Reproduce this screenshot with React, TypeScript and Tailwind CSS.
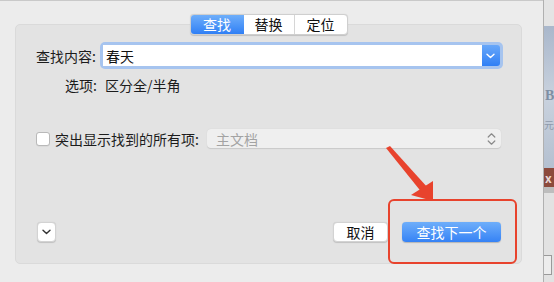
import React from "react";

const font = { fontFamily: '"Noto Sans CJK SC", "Noto Sans", sans-serif' };

function ChevronDown({ className = "", color = "#fff" }: { className?: string; color?: string }) {
  return (
    <svg className={className} width="9" height="6" viewBox="0 0 9 6" fill="none">
      <path d="M1 1.2 L4.5 4.6 L8 1.2" stroke={color} strokeWidth="1.4" strokeLinecap="round" strokeLinejoin="round" />
    </svg>
  );
}

function UpDown() {
  return (
    <svg width="9" height="14" viewBox="0 0 9 14" fill="none">
      <path d="M1.2 5 L4.5 1.8 L7.8 5" stroke="#8a8a8a" strokeWidth="1.2" strokeLinecap="round" strokeLinejoin="round" />
      <path d="M1.2 9 L4.5 12.2 L7.8 9" stroke="#8a8a8a" strokeWidth="1.2" strokeLinecap="round" strokeLinejoin="round" />
    </svg>
  );
}

export default function App() {
  return (
    <div className="relative flex h-[282px] w-[554px] overflow-hidden bg-[#ececec] text-[14px] text-[#1c1c1c]" style={font}>
      {/* window */}
      <div className="flex w-[543px] flex-col border-t border-[#c9c9c9] bg-[#ececec] pl-[15px] pr-[21px] pt-[13px]">
        {/* tabs */}
        <div className="relative z-10 flex justify-center">
          <div className="flex h-[21px] overflow-hidden rounded-[4px] border border-[#cfcfcf] bg-white text-[14px] leading-[19px] shadow-[0_0.5px_1px_rgba(0,0,0,0.15)]">
            <div className="flex w-[53px] items-center justify-center bg-gradient-to-b from-[#6eaefa] to-[#2f7ff5] text-white">查找</div>
            <div className="flex w-[51px] items-center justify-center border-r border-[#d6d6d6] text-[#111]">替换</div>
            <div className="flex w-[52px] items-center justify-center text-[#111]">定位</div>
          </div>
        </div>
        {/* panel */}
        <div className="-mt-[11px] flex flex-col rounded-[5px] border border-[#dadada] bg-[#e3e3e3] pb-[21px] pl-[20px] pr-[20px] pt-[17px]">
          {/* row 1 */}
          <div className="flex h-[27px] items-center">
            <div className="w-[61px] whitespace-nowrap text-right leading-[18px]">查找内容:</div>
            <div className="ml-[4px] flex h-[27px] w-[403px] shrink-0 rounded-[5px] bg-[#a6c4ef] p-[3px]">
              <div className="flex h-[21px] flex-1 items-center bg-white pl-[3px] leading-[18px] text-[#111]">春天</div>
              <div className="flex h-[21px] w-[18px] items-center justify-center rounded-r-[3px] bg-gradient-to-b from-[#67a7f9] to-[#2f7ff5]">
                <ChevronDown />
              </div>
            </div>
          </div>
          {/* row 2 */}
          <div className="mt-[7px] flex h-[18px] items-center leading-[18px]">
            <div className="w-[61px] text-right">选项:</div>
            <div className="ml-[8px]">区分全/半角</div>
          </div>
          {/* row 3 */}
          <div className="mt-[35px] flex h-[19px] items-center">
            <div className="h-[14px] w-[14px] shrink-0 rounded-[3px] border border-[#b9b9b9] bg-white shadow-[0_0.5px_0.5px_rgba(0,0,0,0.08)]" />
            <div className="ml-[5px] whitespace-nowrap leading-[18px]">突出显示找到的所有项:</div>
            <div className="ml-[8px] flex h-[19px] flex-1 items-center justify-between rounded-[4px] bg-[#efefef] pl-[9px] pr-[5px] shadow-[0_0.5px_1px_rgba(0,0,0,0.12)]">
              <span className="leading-[18px] text-[#a3a3a3]">主文档</span>
              <UpDown />
            </div>
          </div>
          {/* row 4 */}
          <div className="mt-[74px] flex h-[20px] items-center">
            <div className="ml-[1px] flex h-[20px] w-[19px] items-center justify-center rounded-[4px] border border-[#d3d3d3] bg-white shadow-[0_0.5px_1px_rgba(0,0,0,0.15)]">
              <ChevronDown color="#333" />
            </div>
            <div className="flex-1" />
            <div className="flex h-[20px] w-[55px] items-center justify-center rounded-[4px] border border-[#d3d3d3] bg-white leading-[18px] text-[#111] shadow-[0_0.5px_1px_rgba(0,0,0,0.15)]">取消</div>
            <div className="ml-[14px] flex h-[20px] w-[99px] items-center justify-center rounded-[4px] bg-gradient-to-b from-[#6eaefa] to-[#3582f5] leading-[18px] text-white shadow-[0_0.5px_1px_rgba(0,0,0,0.2)]">查找下一个</div>
          </div>
        </div>
      </div>

      {/* right background strip (other app) */}
      <div className="flex w-[11px] flex-col border-l border-[#b0b0b0]">
        <div className="h-[26px] bg-[#e4e4e4]" />
        <div className="flex h-[142px] flex-col bg-gradient-to-b from-[#a9b7cb] via-[#c9d2de] to-[#b4c0d0]">
          <div className="mt-[62px] h-[16px] overflow-hidden pl-[1px] text-[14px] font-bold leading-[16px] text-[#7f8fa3]" style={{ fontFamily: '"Liberation Serif", serif' }}>B</div>
          <div className="mt-[14px] h-[14px] overflow-hidden text-[10px] leading-[14px] text-[#8f9aab]">元</div>
        </div>
        <div className="flex h-[19px] items-center bg-[#8c4a3c] pl-[1px] text-[12px] font-bold leading-[14px] text-[#e8d8d4]">x</div>
        <div className="h-[6px] bg-[#bdbdbd]" />
        <div className="flex flex-1 flex-col bg-[#e2e2e2]">
          <div className="mt-[62px] h-[20px] w-[8px] border border-l-0 border-[#9a9a9a] bg-[#ededed]" />
        </div>
      </div>

      {/* annotation: red box */}
      <div className="pointer-events-none absolute left-[388px] top-[199px] h-[65px] w-[129px] rounded-[6px] border-2 border-[#e8432d]" />
      {/* annotation: arrow */}
      <svg className="pointer-events-none absolute left-0 top-0" width="554" height="282" viewBox="0 0 554 282">
        <polygon points="386,148 390,146 428,188 423,194" fill="#e8432d" />
        <polygon points="433,201 411,195 433,181" fill="#e8432d" />
      </svg>
    </div>
  );
}
